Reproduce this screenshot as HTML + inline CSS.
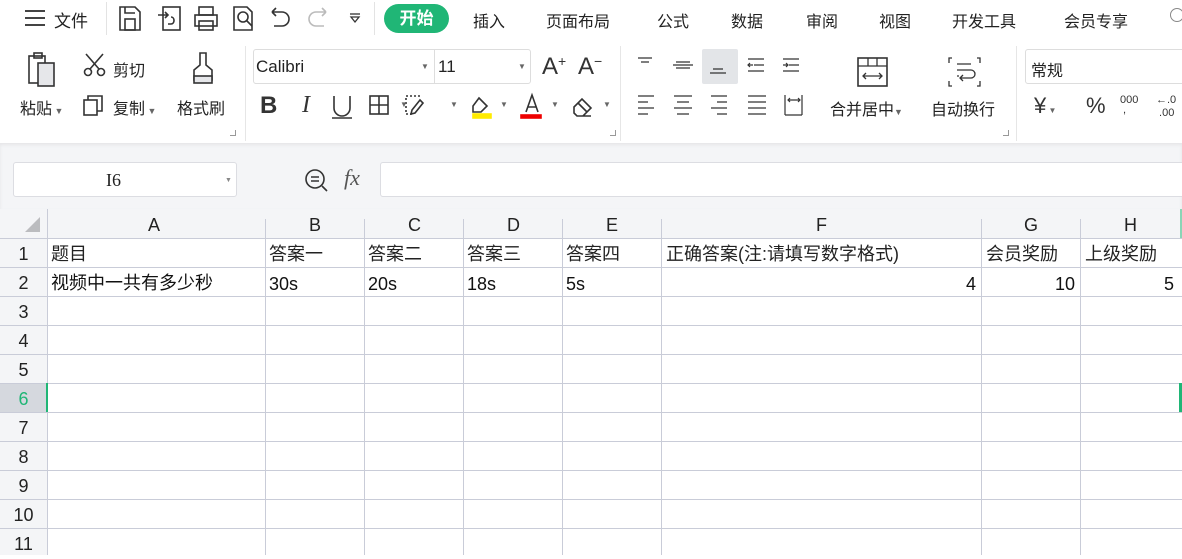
<!DOCTYPE html>
<html><head><meta charset="utf-8"><style>
*{margin:0;padding:0;box-sizing:border-box}
body{width:1182px;height:555px;overflow:hidden;background:#fff;font-family:"Liberation Sans","Noto Sans CJK SC",sans-serif;color:#222;position:relative}
.a{position:absolute;white-space:nowrap}
.t{font-size:16px}
svg{position:absolute}
.g line,.g rect,.g path,.g polyline,.g circle{stroke:#333;stroke-width:1.6;fill:none}
.r span{line-height:24px;height:24px}
</style></head><body>
<!-- top menu -->
<div class="a" style="left:25px;top:10px;width:20px;">
<div style="height:2px;background:#444;margin-bottom:5px"></div><div style="height:2px;background:#444;margin-bottom:5px"></div><div style="height:2px;background:#444"></div></div>
<div class="a t" style="left:54px;top:7px;font-size:17px">文件</div>
<div class="a" style="left:106px;top:2px;width:1px;height:33px;background:#e3e3e3"></div>
<svg class="g" style="left:0;top:0" width="370" height="40">
<path d="M120 7h15l5 5v18h-20z"/><rect x="125" y="19" width="10" height="11"/><path d="M125 7v6h10"/>
<rect x="163" y="7" width="17" height="23"/><path d="M158 15h10M165 12l3 3-3 3M171 17c4 0 4 7 0 7h-3"/>
<rect x="195" y="15" width="22" height="11"/><rect x="199" y="7" width="14" height="8"/><rect x="199" y="21" width="14" height="9"/>
<path d="M234 7h13l5 5v18h-18z"/><circle cx="243" cy="17" r="5"/><path d="M247 21l5 5"/>
<path d="M272 12h10a7 7 0 0 1 0 14h-8M272 12l4-4M272 12l4 4"/>
<path style="stroke:#bbb" d="M326 12h-10a7 7 0 0 0 0 14h8M326 12l-4-4M326 12l-4 4"/>
<path d="M351 17h8l-4 5z" style="stroke-width:1.3"/><path d="M350 14h10" style="stroke-width:1.3"/>
</svg>
<div class="a" style="left:374px;top:2px;width:1px;height:33px;background:#e3e3e3"></div>
<div class="a" style="left:384px;top:4px;width:65px;height:29px;border-radius:15px;background:#20b676;color:#fff;font-size:17px;font-weight:bold;text-align:center;line-height:29px">开始</div>
<div class="a" style="left:473px;top:8px;font-size:16px">插入</div>
<div class="a" style="left:546px;top:8px;font-size:16px">页面布局</div>
<div class="a" style="left:657px;top:8px;font-size:16px">公式</div>
<div class="a" style="left:731px;top:8px;font-size:16px">数据</div>
<div class="a" style="left:806px;top:8px;font-size:16px">审阅</div>
<div class="a" style="left:879px;top:8px;font-size:16px">视图</div>
<div class="a" style="left:952px;top:8px;font-size:16px">开发工具</div>
<div class="a" style="left:1064px;top:8px;font-size:16px">会员专享</div>
<div class="a" style="left:1170px;top:8px;width:14px;height:14px;border:1.5px solid #888;border-radius:50%"></div>
<!-- ribbon -->
<svg class="g" style="left:0;top:40px" width="640" height="100">
<rect x="29" y="16" width="16" height="27"/><rect x="38" y="23" width="16" height="23" style="fill:#e6e7ea"/><rect x="34" y="13" width="8" height="5"/>
<circle cx="88" cy="32" r="3.5"/><circle cx="101" cy="32" r="3.5"/><path d="M90 29l13-15M99 29L86 14"/>
<path d="M200 13h6v12l6 5v10h-18V30l6-5z"/><rect x="194" y="36" width="18" height="7" style="fill:#e6e7ea"/>
<rect x="84" y="60" width="13" height="15"/><path d="M88 60v-4h14v15h-5"/>
</svg>
<div class="a t" style="left:113px;top:57px">剪切</div>
<div class="a t" style="left:20px;top:95px">粘贴<span style="font-size:9px;color:#666"> ▼</span></div>
<div class="a t" style="left:113px;top:95px">复制<span style="font-size:9px;color:#666"> ▼</span></div>
<div class="a t" style="left:177px;top:95px">格式刷</div>
<div class="a" style="left:230px;top:130px;width:6px;height:6px;border-right:1.5px solid #999;border-bottom:1.5px solid #999"></div>
<div class="a" style="left:245px;top:46px;width:1px;height:95px;background:#e6e6e6"></div>
<div class="a" style="left:253px;top:49px;width:278px;height:35px;border:1px solid #ddd;border-radius:3px"></div>
<div class="a" style="left:434px;top:49px;width:1px;height:35px;background:#ddd"></div>
<div class="a" style="left:256px;top:57px;font-size:17px">Calibri</div>
<div class="a" style="left:421px;top:62px;font-size:8px;color:#666">▼</div>
<div class="a" style="left:438px;top:57px;font-size:17px">11</div>
<div class="a" style="left:518px;top:62px;font-size:8px;color:#666">▼</div>
<div class="a" style="left:542px;top:53px;font-size:24px;color:#333">A<span style="font-size:14px;vertical-align:top">+</span></div>
<div class="a" style="left:578px;top:53px;font-size:24px;color:#333">A<span style="font-size:14px;vertical-align:top">−</span></div>
<div class="a" style="left:260px;top:92px;font-size:24px;font-weight:bold;color:#333">B</div>
<div class="a" style="left:302px;top:92px;font-size:24px;font-style:italic;font-family:'Liberation Serif';color:#333">I</div>
<svg class="g" style="left:330px;top:92px" width="290" height="30">
<path d="M4 4v12a8 8 0 0 0 16 0V4M2 26h20"/>
<rect x="40" y="4" width="18" height="18"/><path d="M49 4v18M40 13h18"/>
<path d="M90 4h-14v18h6" stroke-dasharray="2 2"/><path d="M90 8l-8 10 -1 4 4-1 8-10z"/>
<path d="M149 6l8 8-6 6h-8v-6z"/><rect x="143" y="22" width="18" height="4" style="fill:#ffeb00;stroke:#ffeb00"/>
<path d="M196 20l6-17 6 17M198 15h8"/><rect x="191" y="23" width="20" height="3" style="fill:#e00;stroke:#e00"/>
<path d="M244 15l8-8 9 9-8 8h-6l-3-3zM248 11l9 9M248 24h13"/>
</svg>
<div class="a" style="left:400px;top:100px;font-size:8px;color:#666">▼</div>
<div class="a" style="left:450px;top:100px;font-size:8px;color:#666">▼</div>
<div class="a" style="left:500px;top:100px;font-size:8px;color:#666">▼</div>
<div class="a" style="left:551px;top:100px;font-size:8px;color:#666">▼</div>
<div class="a" style="left:603px;top:100px;font-size:8px;color:#666">▼</div>
<div class="a" style="left:610px;top:130px;width:6px;height:6px;border-right:1.5px solid #999;border-bottom:1.5px solid #999"></div>
<div class="a" style="left:620px;top:46px;width:1px;height:95px;background:#e6e6e6"></div>
<div class="a" style="left:702px;top:49px;width:36px;height:35px;background:#e3e5e8;border-radius:2px"></div>
<svg class="g" style="left:630px;top:50px" width="380" height="75">
<path d="M8 8h14M11 12h8" style="stroke-width:1.2"/>
<path d="M43 15h20M46 12h14M46 18h14" style="stroke-width:1.2"/>
<path d="M80 23h16M83 19h10" style="stroke-width:1.2"/>
<path d="M118 9h16M124 15h10M118 21h16M118 15h5M120 13l-2 2 2 2" style="stroke-width:1.2"/>
<path d="M153 9h16M159 15h10M153 21h16M153 15h5M156 13l2 2-2 2" style="stroke-width:1.2"/>
<path d="M8 46h16M8 52h10M8 58h16M8 64h10" style="stroke-width:1.2"/>
<path d="M44 46h18M47 52h12M44 58h18M47 64h12" style="stroke-width:1.2"/>
<path d="M81 46h16M87 52h10M81 58h16M87 64h10" style="stroke-width:1.2"/>
<path d="M118 46h18M118 52h18M118 58h18M118 64h18" style="stroke-width:1.2"/>
<path d="M155 45v20M172 45v20M155 65h17M158 50h12M160 48l-2 2 2 2M168 48l2 2-2 2" style="stroke-width:1.2"/>
<rect x="228" y="8" width="29" height="28"/><path d="M228 16h29M238 8v8M247 8v8M233 26h19M236 23l-3 3 3 3M249 23l3 3-3 3" style="stroke-width:1.3"/>
<path d="M322 8h-3v5M347 8h3v5M322 36h-3v-5M347 36h3v-5M327 14h14M327 20h14a4 4 0 0 1 0 8h-10M333 25l-3 3 3 3M327 26h2" style="stroke-width:1.3"/>
</svg>
<div class="a t" style="left:830px;top:96px">合并居中<span style="font-size:9px;color:#666">▼</span></div>
<div class="a t" style="left:931px;top:96px">自动换行</div>
<div class="a" style="left:1003px;top:130px;width:6px;height:6px;border-right:1.5px solid #999;border-bottom:1.5px solid #999"></div>
<div class="a" style="left:1016px;top:46px;width:1px;height:95px;background:#e6e6e6"></div>
<div class="a" style="left:1025px;top:49px;width:170px;height:35px;border:1px solid #ddd;border-radius:3px"></div>
<div class="a t" style="left:1031px;top:57px">常规</div>
<div class="a" style="left:1034px;top:93px;font-size:22px;color:#333">¥<span style="font-size:8px;color:#666"> ▼</span></div>
<div class="a" style="left:1086px;top:93px;font-size:22px;color:#333">%</div>
<div class="a" style="left:1120px;top:95px;font-size:11px;line-height:10px;color:#333">000<br>&nbsp;,</div>
<div class="a" style="left:1156px;top:94px;font-size:11px;line-height:13px;color:#333">←.0<br>&nbsp;.00</div>
<!-- gray band -->
<div class="a" style="left:0;top:143px;width:1182px;height:66px;background:#f4f5f7;box-shadow:inset 0 2px 3px #e6e6e8"></div>
<div class="a" style="left:13px;top:162px;width:224px;height:35px;background:#fff;border:1px solid #dcdde2;border-radius:3px"></div>
<div class="a" style="left:106px;top:170px;font-size:18px;font-family:'Liberation Serif'">I6</div>
<div class="a" style="left:225px;top:177px;font-size:7px;color:#888">▼</div>
<svg class="g" style="left:303px;top:167px" width="30" height="30"><circle cx="12" cy="12" r="9"/><path d="M8 10h8M8 14h8M19 19l5 5"/></svg>
<div class="a" style="left:344px;top:165px;font-size:22px;font-style:italic;font-family:'Liberation Serif';color:#555">fx</div>
<div class="a" style="left:380px;top:162px;width:810px;height:35px;background:#fff;border:1px solid #dcdde2;border-radius:3px"></div>
<!-- grid -->
<svg style="left:0;top:209px" width="1182" height="346">
<rect x="0" y="0" width="1182" height="29" fill="#f4f5f7"/>
<rect x="0" y="0" width="47" height="346" fill="#f4f5f7"/>
<rect x="0" y="174" width="47" height="29" fill="#d5d8de"/>
<polygon points="40,8 40,23 25,23" fill="#bbbcbf"/>
<g stroke="#c9ccd8" stroke-width="1">
<line x1="47.5" y1="0" x2="47.5" y2="346"/>
<line x1="265.5" y1="10" x2="265.5" y2="346"/><line x1="364.5" y1="10" x2="364.5" y2="346"/><line x1="463.5" y1="10" x2="463.5" y2="346"/><line x1="562.5" y1="10" x2="562.5" y2="346"/><line x1="661.5" y1="10" x2="661.5" y2="346"/><line x1="981.5" y1="10" x2="981.5" y2="346"/><line x1="1080.5" y1="10" x2="1080.5" y2="346"/>
<line x1="0" y1="29.5" x2="1182" y2="29.5"/><line x1="0" y1="58.5" x2="1182" y2="58.5"/><line x1="0" y1="87.5" x2="1182" y2="87.5"/><line x1="0" y1="116.5" x2="1182" y2="116.5"/><line x1="0" y1="145.5" x2="1182" y2="145.5"/><line x1="0" y1="174.5" x2="1182" y2="174.5"/><line x1="0" y1="203.5" x2="1182" y2="203.5"/><line x1="0" y1="232.5" x2="1182" y2="232.5"/><line x1="0" y1="261.5" x2="1182" y2="261.5"/><line x1="0" y1="290.5" x2="1182" y2="290.5"/><line x1="0" y1="319.5" x2="1182" y2="319.5"/>
</g>
<rect x="46" y="174" width="2" height="29" fill="#20b676"/>
<rect x="1179" y="174" width="3" height="29" fill="#20b676"/>
<rect x="1180" y="0" width="2" height="29" fill="#20b676" opacity=".5"/>
</svg>
<div class="a r" style="top:213px;left:0;width:1182px;font-size:18px;color:#222">
<span class="a" style="left:148px">A</span><span class="a" style="left:309px">B</span><span class="a" style="left:408px">C</span><span class="a" style="left:507px">D</span><span class="a" style="left:606px">E</span><span class="a" style="left:816px">F</span><span class="a" style="left:1024px">G</span><span class="a" style="left:1124px">H</span></div>
<div class="a" style="left:0;top:240px;width:47px;text-align:center;font-size:18px;line-height:29px">1<br>2<br>3<br>4<br>5<br><span style="color:#20b676">6</span><br>7<br>8<br>9<br>10<br>11</div>
<div class="a r" style="top:242px;left:0;font-size:18px;color:#222">
<span class="a" style="left:51px">题目</span><span class="a" style="left:269px">答案一</span><span class="a" style="left:368px">答案二</span><span class="a" style="left:467px">答案三</span><span class="a" style="left:566px">答案四</span><span class="a" style="left:666px">正确答案(注:请填写数字格式)</span><span class="a" style="left:986px">会员奖励</span><span class="a" style="left:1085px">上级奖励</span></div>
<div class="a r" style="top:271px;left:0;font-size:18px;color:#111">
<span class="a" style="left:51px">视频中一共有多少秒</span><span class="a" style="left:269px;top:1px">30s</span><span class="a" style="left:368px;top:1px">20s</span><span class="a" style="left:467px;top:1px">18s</span><span class="a" style="left:566px;top:1px">5s</span><span class="a" style="left:966px;top:1px">4</span><span class="a" style="left:1055px;top:1px">10</span><span class="a" style="left:1164px;top:1px">5</span></div>
</body></html>
